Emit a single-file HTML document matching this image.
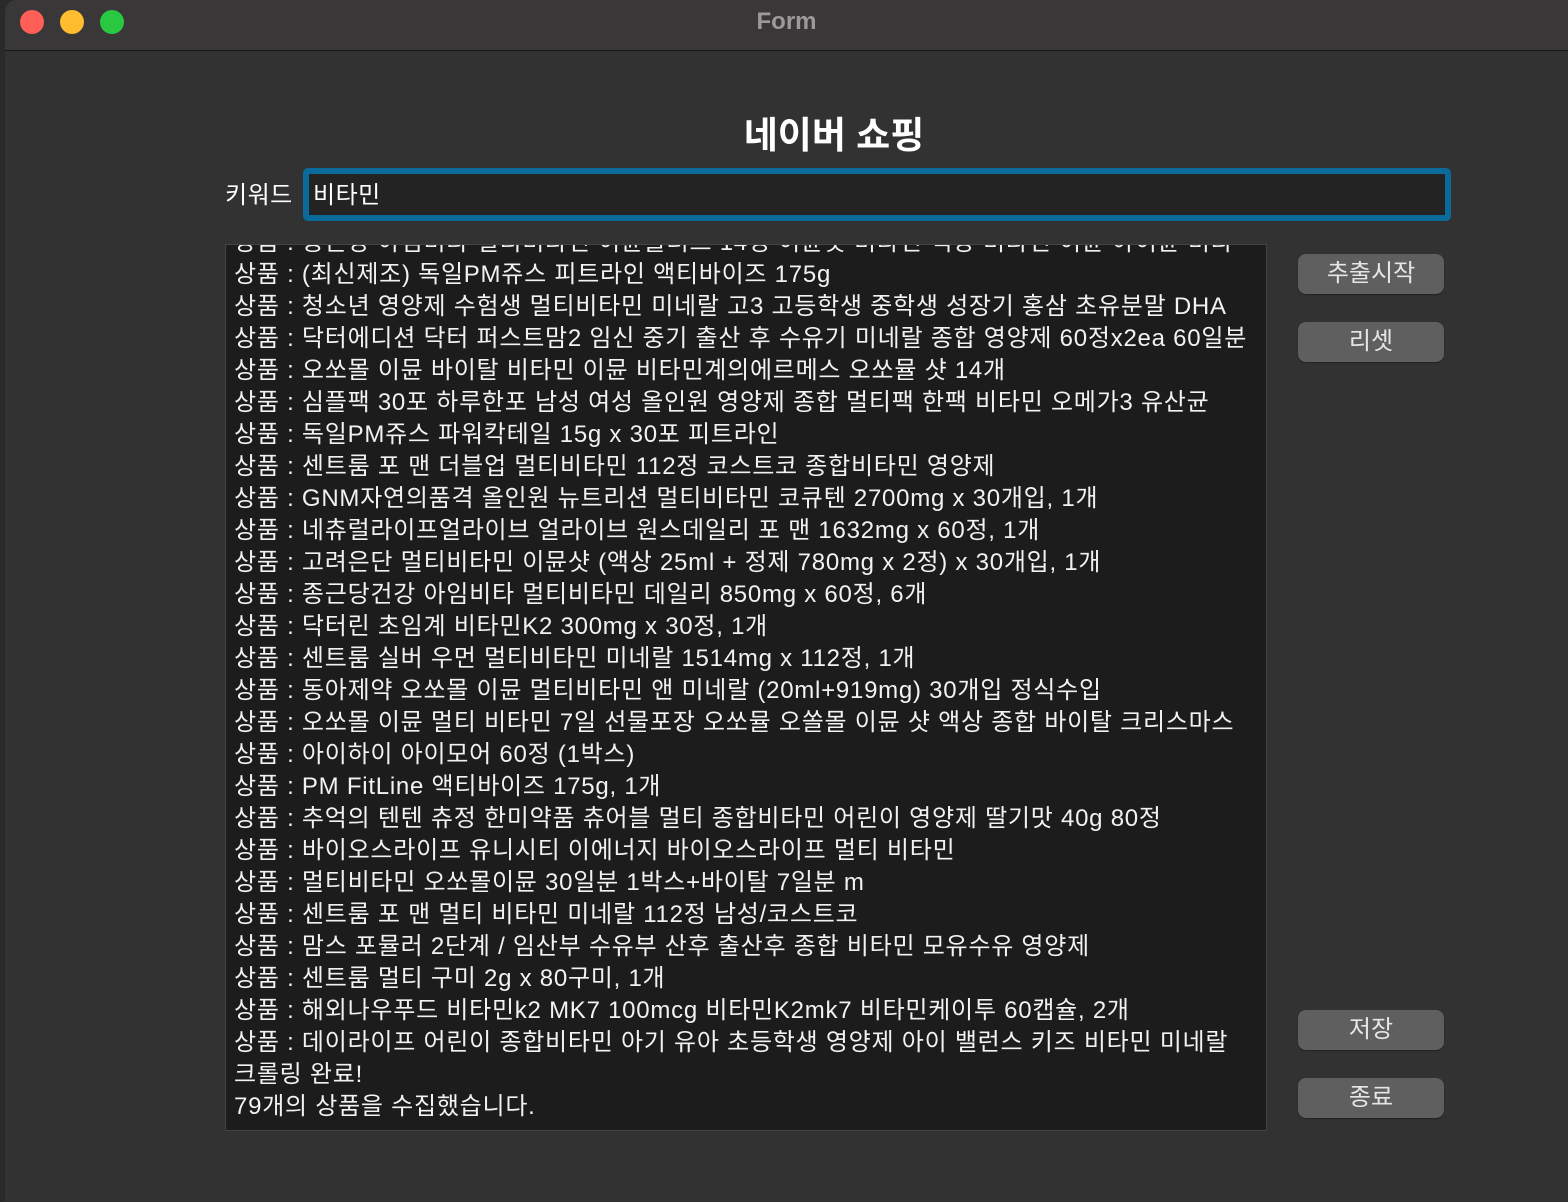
<!DOCTYPE html>
<html><head><meta charset="utf-8"><style>
html,body{margin:0;padding:0;width:1568px;height:1202px;overflow:hidden;background:#2a2a2a;}
body{font-family:"Liberation Sans","Noto Sans CJK KR",sans-serif;position:relative;}
.win{position:absolute;left:5px;top:0;width:1563px;height:1202px;background:#323232;border-top-left-radius:12px;overflow:hidden;}
.tb{position:absolute;left:0;top:0;right:0;height:50px;background:#3a3739;border-bottom:1px solid #161616;}
.dot{position:absolute;top:10px;width:24px;height:24px;border-radius:50%;}
.ttl{position:absolute;left:0;right:0;top:8px;text-align:center;color:#9c989c;font-weight:bold;font-size:24px;}
.h1{position:absolute;left:0;width:1658px;top:111px;text-align:center;color:#fff;font-weight:bold;font-size:37px;line-height:50px;}
.lbl{position:absolute;left:220px;top:178px;color:#fff;font-size:24px;line-height:36px;letter-spacing:0.5px;}
.inp{position:absolute;left:298px;top:168px;width:1136px;height:41px;border:6px solid #0a6a9a;border-radius:5px;background:#232323;}
.inp span{position:absolute;left:4px;top:2px;color:#fff;font-size:24px;line-height:40px;letter-spacing:0.5px;}
.ta{position:absolute;left:220px;top:244px;width:1040px;height:885px;background:#1c1c1c;border:1px solid #444;overflow:hidden;}
.ta div{position:absolute;left:8px;top:-18px;color:#f2f2f2;font-size:24px;line-height:32px;white-space:nowrap;letter-spacing:0.75px;}
.btn{position:absolute;left:1293px;width:146px;height:40px;background:#5f5f5f;border-radius:8px;color:#e6e6e6;font-size:24px;line-height:40px;text-align:center;box-shadow:0 1px 1px #222;}
</style></head><body>
<div class="win">
<div class="tb"><div class="dot" style="left:15px;background:#fe5f57"></div><div class="dot" style="left:55px;background:#febc2e"></div><div class="dot" style="left:95px;background:#28c840"></div><div class="ttl">Form</div></div>
<div class="h1">네이버 쇼핑</div>
<div class="lbl">키워드</div>
<div class="inp"><span>비타민</span></div>
<div class="ta"><div>
상품 : 종근당 아임비타 멀티비타민 이뮨플러스 14병 이뮨샷 비타민 액상 비타민 이뮨 아이뮨 비타<br>
상품 : (최신제조) 독일PM쥬스 피트라인 액티바이즈 175g<br>
상품 : 청소년 영양제 수험생 멀티비타민 미네랄 고3 고등학생 중학생 성장기 홍삼 초유분말 DHA<br>
상품 : 닥터에디션 닥터 퍼스트맘2 임신 중기 출산 후 수유기 미네랄 종합 영양제 60정x2ea 60일분<br>
상품 : 오쏘몰 이뮨 바이탈 비타민 이뮨 비타민계의에르메스 오쏘뮬 샷 14개<br>
상품 : 심플팩 30포 하루한포 남성 여성 올인원 영양제 종합 멀티팩 한팩 비타민 오메가3 유산균<br>
상품 : 독일PM쥬스 파워칵테일 15g x 30포 피트라인<br>
상품 : 센트룸 포 맨 더블업 멀티비타민 112정 코스트코 종합비타민 영양제<br>
상품 : GNM자연의품격 올인원 뉴트리션 멀티비타민 코큐텐 2700mg x 30개입, 1개<br>
상품 : 네츄럴라이프얼라이브 얼라이브 원스데일리 포 맨 1632mg x 60정, 1개<br>
상품 : 고려은단 멀티비타민 이뮨샷 (액상 25ml + 정제 780mg x 2정) x 30개입, 1개<br>
상품 : 종근당건강 아임비타 멀티비타민 데일리 850mg x 60정, 6개<br>
상품 : 닥터린 초임계 비타민K2 300mg x 30정, 1개<br>
상품 : 센트룸 실버 우먼 멀티비타민 미네랄 1514mg x 112정, 1개<br>
상품 : 동아제약 오쏘몰 이뮨 멀티비타민 앤 미네랄 (20ml+919mg) 30개입 정식수입<br>
상품 : 오쏘몰 이뮨 멀티 비타민 7일 선물포장 오쏘뮬 오쏠몰 이뮨 샷 액상 종합 바이탈 크리스마스<br>
상품 : 아이하이 아이모어 60정 (1박스)<br>
상품 : PM FitLine 액티바이즈 175g, 1개<br>
상품 : 추억의 텐텐 츄정 한미약품 츄어블 멀티 종합비타민 어린이 영양제 딸기맛 40g 80정<br>
상품 : 바이오스라이프 유니시티 이에너지 바이오스라이프 멀티 비타민<br>
상품 : 멀티비타민 오쏘몰이뮨 30일분 1박스+바이탈 7일분 m<br>
상품 : 센트룸 포 맨 멀티 비타민 미네랄 112정 남성/코스트코<br>
상품 : 맘스 포뮬러 2단계 / 임산부 수유부 산후 출산후 종합 비타민 모유수유 영양제<br>
상품 : 센트룸 멀티 구미 2g x 80구미, 1개<br>
상품 : 해외나우푸드 비타민k2 MK7 100mcg 비타민K2mk7 비타민케이투 60캡슐, 2개<br>
상품 : 데이라이프 어린이 종합비타민 아기 유아 초등학생 영양제 아이 밸런스 키즈 비타민 미네랄<br>
크롤링 완료!<br>
79개의 상품을 수집했습니다.
</div></div>
<div class="btn" style="top:254px">추출시작</div>
<div class="btn" style="top:322px">리셋</div>
<div class="btn" style="top:1010px">저장</div>
<div class="btn" style="top:1078px">종료</div>
</div>
</body></html>
